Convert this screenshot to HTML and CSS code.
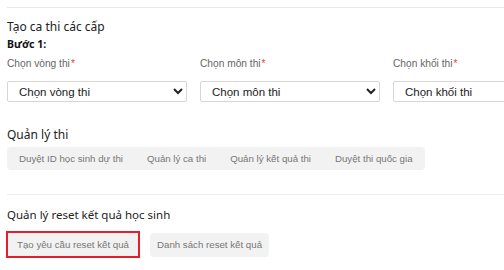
FILE: index.html
```html
<!DOCTYPE html>
<html lang="vi">
<head>
  <meta charset="UTF-8" />
  <title>Quản lý thi</title>
  <link rel="stylesheet" href="styles.css">
</head>
<body>
  <div class="page">
    <div class="divider"></div>

    <div class="section">
      <h2>Tạo ca thi các cấp</h2>
      <h3>Bước 1:</h3>
      <div class="filters">
        <div class="field">
          <label>Chọn vòng thi<span class="req">*</span></label>
          <select><option>Chọn vòng thi</option></select>
        </div>
        <div class="field">
          <label>Chọn môn thi<span class="req">*</span></label>
          <select><option>Chọn môn thi</option></select>
        </div>
        <div class="field">
          <label>Chọn khối thi<span class="req">*</span></label>
          <select><option>Chọn khối thi</option></select>
        </div>
      </div>
    </div>

    <div class="section manage">
      <h2>Quản lý thi</h2>
      <div class="btn-group">
        <button class="btn">Duyệt ID học sinh dự thi</button>
        <button class="btn">Quản lý ca thi</button>
        <button class="btn">Quản lý kết quả thi</button>
        <button class="btn">Duyệt thi quốc gia</button>
      </div>
    </div>

    <div class="divider second"></div>

    <div class="section reset">
      <h2>Quản lý reset kết quả học sinh</h2>
      <div class="actions">
        <button class="btn boxed active">Tạo yêu cầu reset kết quả</button>
        <button class="btn boxed">Danh sách reset kết quả</button>
      </div>
    </div>
  </div>
</body>
</html>
```

FILE: styles.css
```css
body {
  margin: 0;
  background-color: #fff;
  font-family: 'Noto Sans', sans-serif;
  color: #222;
  overflow: hidden;
}

.page {
  padding: 7px 0 0 7px;
  overflow: hidden;
}

.divider {
  height: 1px;
  background-color: #e8e8e8;
}

.divider.second {
  margin-top: 24px;
  background-color: #eee;
}

h2 {
  font-size: 12px;
  font-weight: normal;
  margin: 0;
  line-height: 16px;
}

.reset h2 {
  font-size: 11.5px;
}

h3 {
  font-size: 10.5px;
  font-weight: bold;
  margin: 2px 0 0;
  line-height: 14px;
  color: #111;
}

.section {
  padding-top: 11px;
}

.filters {
  display: flex;
  gap: 13px;
  margin-top: 6px;
}

.field {
  width: 180px;
  flex-shrink: 0;
  display: flex;
  flex-direction: column;
}

.field label {
  font-family: 'Liberation Sans', Arial, sans-serif;
  font-size: 10.2px;
  color: #666;
  line-height: 14px;
}

.req {
  color: #e8383d;
  font-size: 10px;
  margin-left: 1px;
}

.field select {
  margin-top: 10px;
  height: 21px;
  font-family: 'Liberation Sans', Arial, sans-serif;
  font-size: 11.5px;
  color: #222;
  background-color: #fff;
  border: 1px solid #d6d6d6;
  border-radius: 2px;
  padding: 0 7px;
}

.manage {
  padding-top: 25px;
}

.btn-group {
  display: inline-flex;
  margin-top: 4px;
  background-color: #f2f2f2;
  border-radius: 4px;
}

.btn {
  font-family: 'Liberation Sans', Arial, sans-serif;
  font-size: 9.7px;
  color: #777;
  background: none;
  border: none;
  padding: 0 12px;
  height: 23px;
  cursor: pointer;
}

.reset {
  padding-top: 12px;
}

.actions {
  display: flex;
  align-items: center;
  gap: 10px;
  margin-top: 8px;
}

.btn.boxed {
  background-color: #f2f2f2;
  border-radius: 4px;
  height: 24px;
  padding: 0 7px;
}

.btn.active {
  border: 2px solid #e0202a;
  border-radius: 0;
  height: 27px;
  padding: 0 9px;
  margin-left: -1px;
}
```
